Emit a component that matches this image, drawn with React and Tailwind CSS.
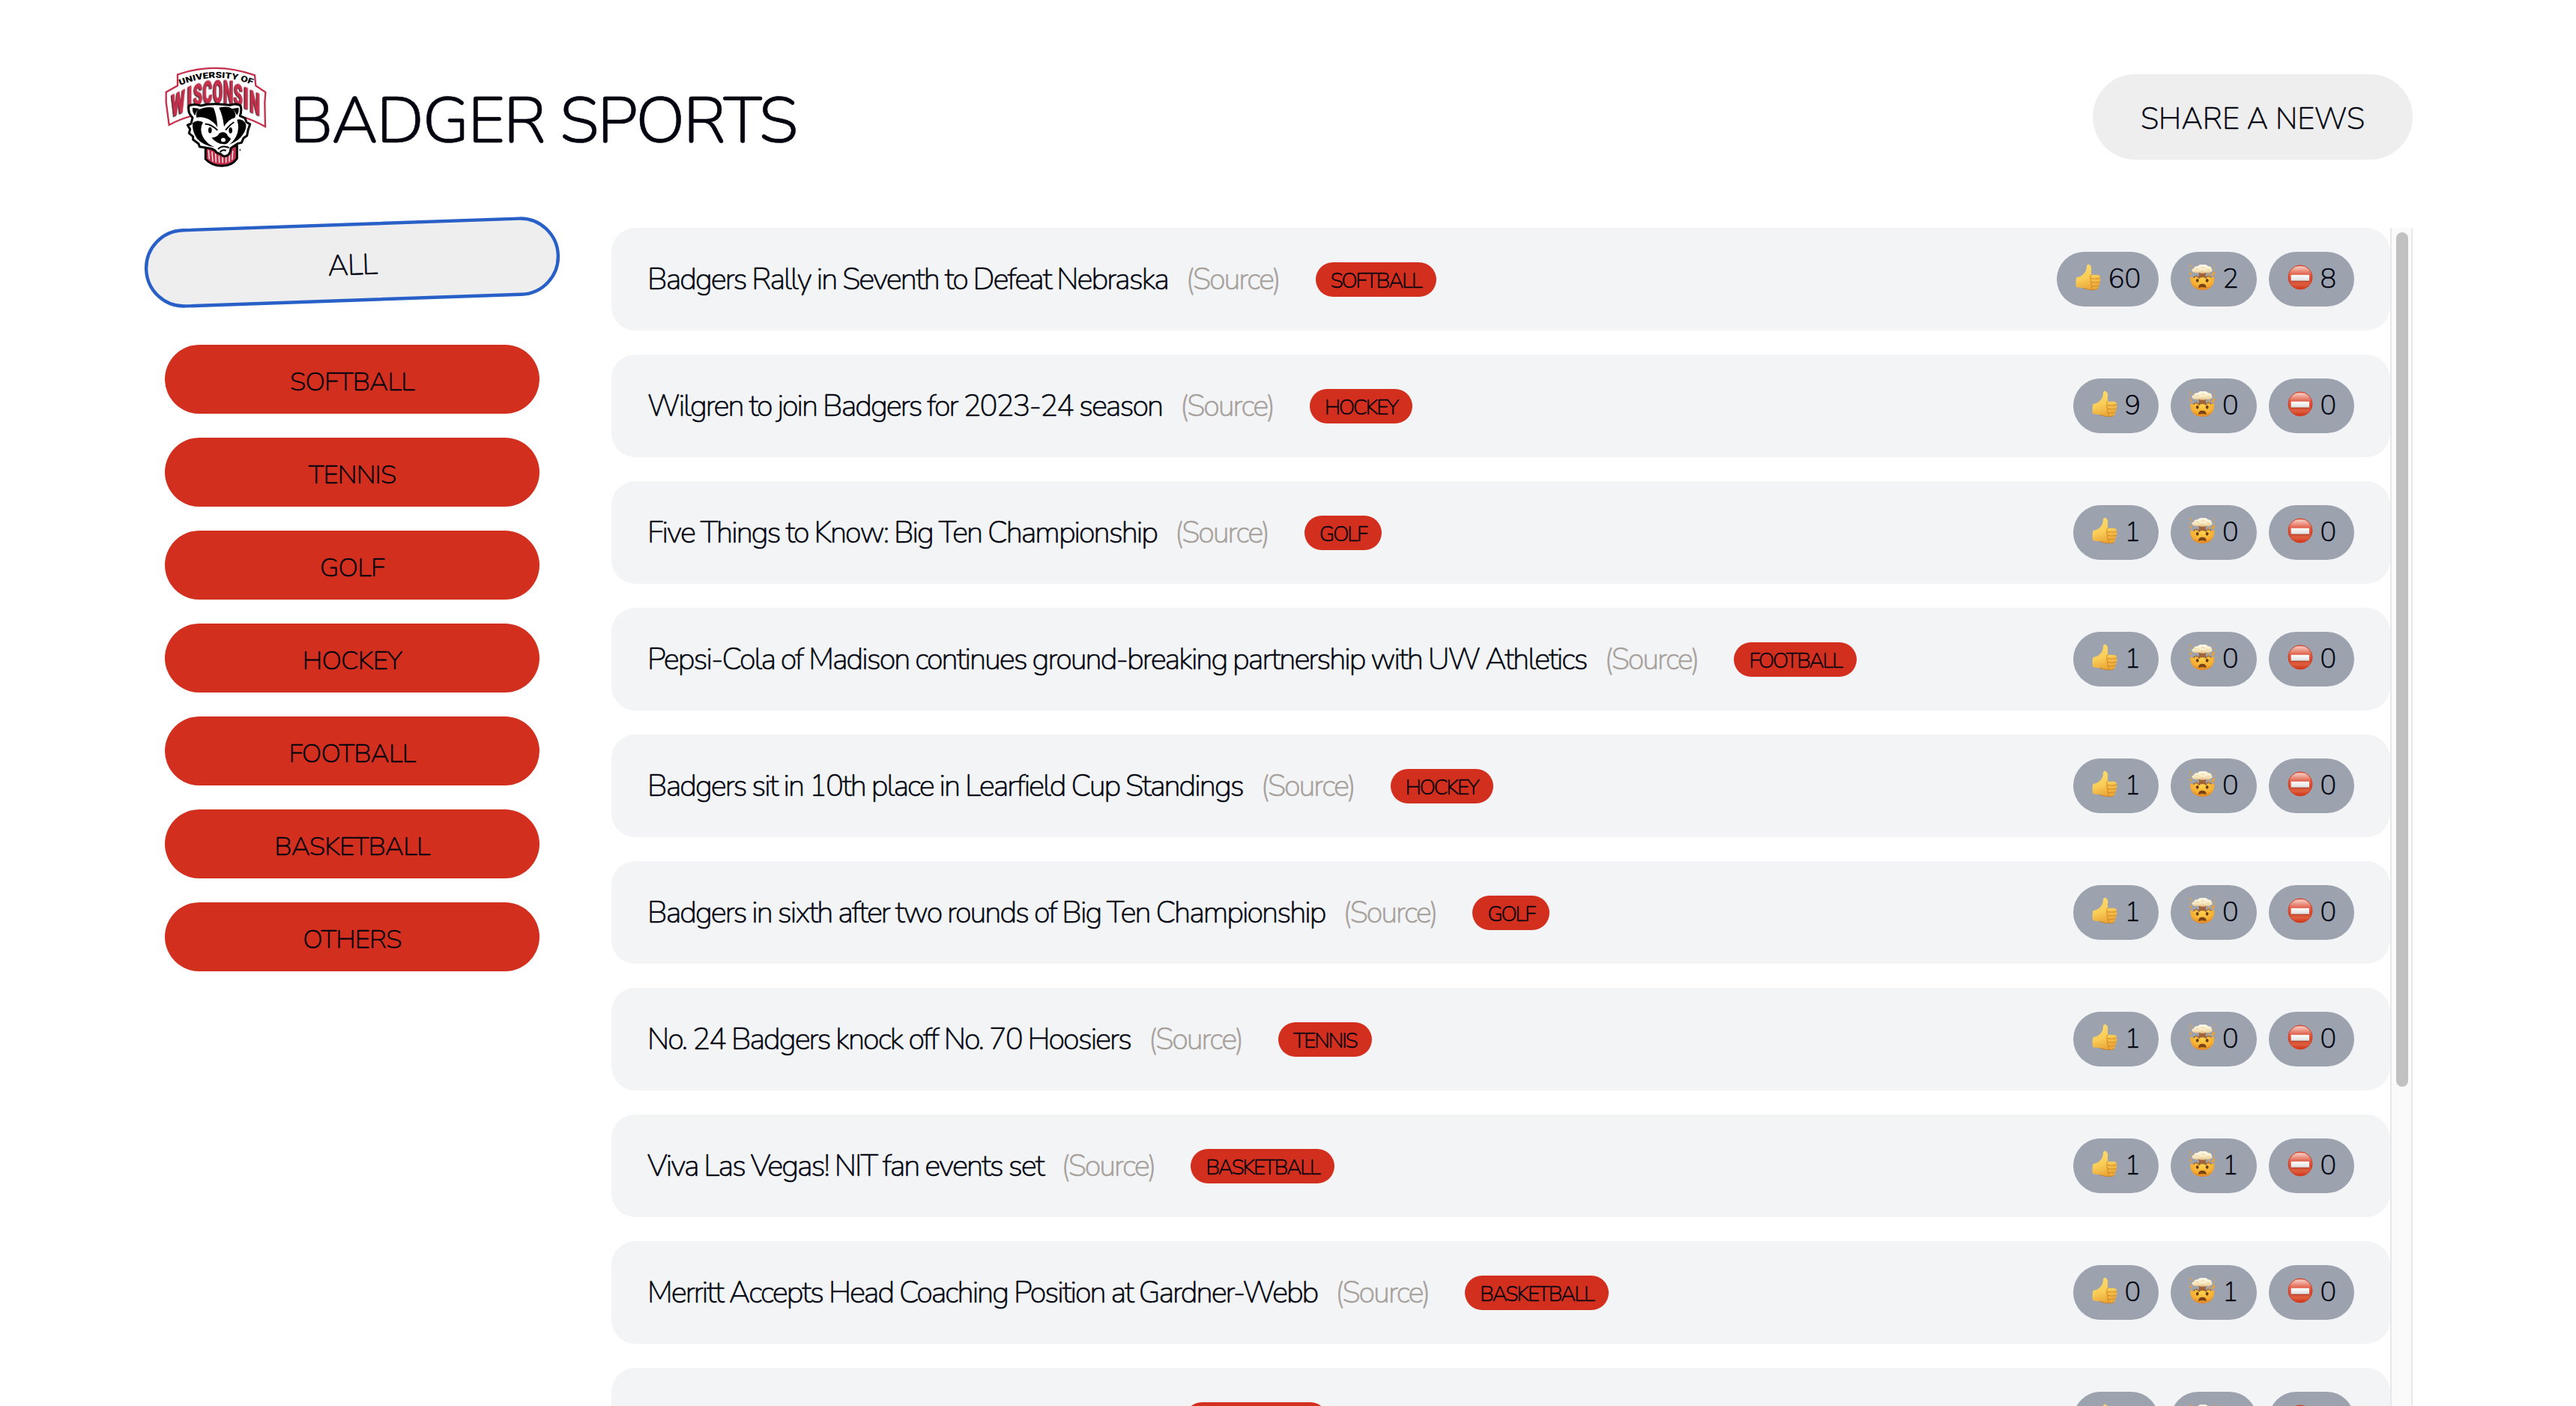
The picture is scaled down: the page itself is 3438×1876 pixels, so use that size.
const CATEGORIES = ["SOFTBALL", "TENNIS", "GOLF", "HOCKEY", "FOOTBALL", "BASKETBALL", "OTHERS"];

const NEWS = [
  { title: "Badgers Rally in Seventh to Defeat Nebraska", tag: "SOFTBALL", votes: [60, 2, 8] },
  { title: "Wilgren to join Badgers for 2023-24 season", tag: "HOCKEY", votes: [9, 0, 0] },
  { title: "Five Things to Know: Big Ten Championship", tag: "GOLF", votes: [1, 0, 0] },
  { title: "Pepsi-Cola of Madison continues ground-breaking partnership with UW Athletics", tag: "FOOTBALL", votes: [1, 0, 0] },
  { title: "Badgers sit in 10th place in Learfield Cup Standings", tag: "HOCKEY", votes: [1, 0, 0] },
  { title: "Badgers in sixth after two rounds of Big Ten Championship", tag: "GOLF", votes: [1, 0, 0] },
  { title: "No. 24 Badgers knock off No. 70 Hoosiers", tag: "TENNIS", votes: [1, 0, 0] },
  { title: "Viva Las Vegas! NIT fan events set", tag: "BASKETBALL", votes: [1, 1, 0] },
  { title: "Merritt Accepts Head Coaching Position at Gardner-Webb", tag: "BASKETBALL", votes: [0, 1, 0] },
  { title: "", tag: "BASKETBALL", votes: [0, 0, 0] },
];

const WORDMARK = [
  { c: "W", x: 115, y: 247, k: -24, sx: 0.64, sy: 1.2 },
  { c: "I", x: 161, y: 221, k: -18, sx: 0.7, sy: 1.16 },
  { c: "S", x: 194, y: 210, k: -12, sx: 0.58, sy: 1.18 },
  { c: "C", x: 233, y: 204, k: -7, sx: 0.58, sy: 1.26 },
  { c: "O", x: 274, y: 202, k: 0, sx: 0.58, sy: 1.3 },
  { c: "N", x: 316, y: 204, k: 5, sx: 0.57, sy: 1.28 },
  { c: "S", x: 355, y: 212, k: 11, sx: 0.57, sy: 1.18 },
  { c: "I", x: 387, y: 226, k: 18, sx: 0.7, sy: 1.16 },
  { c: "N", x: 422, y: 246, k: 24, sx: 0.58, sy: 1.2 },
];

function Logo() {
  return (
    <svg viewBox="62 58 406 402" className="h-[134px] w-[136px] shrink-0">
      <path
        d="M112 90 Q262 36 421 92 L425 134 L464 160 L461 202 L463 298 Q270 190 78 291 L66 200 L66 160 L112 134 Z"
        fill="#fff" stroke="#c5304c" strokeWidth="7"
      />
      <path id="arch" d="M122 133 Q268 74 410 130" fill="none" />
      <text fontFamily="Roboto" fontWeight="900" fontSize="33" fill="#000">
        <textPath href="#arch" textLength="296" lengthAdjust="spacingAndGlyphs">UNIVERSITY OF</textPath>
      </text>
      {WORDMARK.map((l, i) => (
        <text
          key={i}
          transform={`translate(${l.x} ${l.y}) skewY(${l.k}) scale(${l.sx} ${l.sy})`}
          fontFamily="Roboto" fontWeight="900" fontSize="100" textAnchor="middle"
          fill="#c5304c" stroke="#c5304c" strokeWidth="2"
          className="drop-shadow-[-4px_2px_0_#1a0a10]"
        >
          {l.c}
        </text>
      ))}
      <path d="M224 375 L224 428 Q250 456 290 455 Q330 455 350 425 L350 375 Z" fill="#c5304c" stroke="#000" strokeWidth="9" />
      <path d="M236 392 L239 428 M250 398 L253 438 M264 405 L266 441 M278 415 L279 443 M292 420 L293 443 M306 418 L306 442 M320 408 L319 438 M333 395 L331 430" stroke="#fff" strokeWidth="4" fill="none" />
      <path
        d="M158 214 Q178 205 205 214 Q250 202 322 212 Q348 203 364 214 Q370 232 362 255 L382 264 L388 280 L402 288 L394 312 L390 334 L376 344 L368 362 L352 366 L325 384 Q324 402 316 410 Q298 424 285 408 L268 402 Q262 390 245 386 L200 378 L196 366 L174 350 L174 338 L158 324 L162 308 L152 292 L166 286 L172 262 Q150 240 158 214 Z"
        fill="#fff" stroke="#000" strokeWidth="9" strokeLinejoin="round"
      />
      <path d="M172 222 L200 226 Q186 234 182 254 Q170 240 172 222 Z M330 226 L356 222 Q360 238 350 252 Q342 236 330 226 Z" fill="#000" />
      <path d="M192 232 Q225 216 256 222 Q268 250 272 300 Q258 280 236 268 Q210 256 188 262 Q184 246 192 232 Z" fill="#000" />
      <path d="M278 222 Q312 214 330 226 Q350 244 342 262 Q316 268 298 298 Q294 256 278 222 Z" fill="#000" />
      <path d="M172 284 Q188 268 214 280 Q198 308 214 340 Q230 368 260 380 Q214 374 190 346 Q170 318 172 284 Z" fill="#000" />
      <path d="M386 288 Q372 264 350 270 Q362 306 346 338 Q334 360 318 370 Q358 356 376 326 Q388 306 386 288 Z" fill="#000" />
      <path d="M222 288 Q242 286 272 312 M338 280 Q322 290 304 312" stroke="#000" strokeWidth="6" fill="none" />
      <ellipse cx="242" cy="312" rx="7" ry="12" fill="#000" />
      <ellipse cx="324" cy="313" rx="7" ry="12" fill="#000" />
      <path d="M248 342 Q270 342 278 326 Q294 314 308 326 Q316 342 326 346 Q314 370 296 368 Q268 366 248 342 Z" fill="#000" />
      <ellipse cx="295" cy="351" rx="9" ry="8" fill="#fff" />
      <path d="M274 388 Q290 370 318 382 M282 400 Q292 388 306 394" stroke="#000" strokeWidth="6" fill="none" />
      <ellipse cx="362" cy="391" rx="2.5" ry="4.5" fill="#333" />
    </svg>
  );
}

function ThumbsUp() {
  return (
    <svg viewBox="0 0 108 108" className="size-9 shrink-0">
      <defs>
        <linearGradient id="thumb" x1="0" y1="0" x2="0.3" y2="1">
          <stop offset="0" stopColor="#fcdc72" />
          <stop offset="0.6" stopColor="#f9cd57" />
          <stop offset="1" stopColor="#eba93a" />
        </linearGradient>
      </defs>
      <path d="M7 54 Q26 52 36 40 Q48 28 48 8 Q50 0 58 3 Q69 9 66 26 Q65 38 68 44 L92 44 Q104 46 101 57 Q106 64 100 72 Q103 80 96 86 Q98 98 90 101 Q84 106 68 104 Q52 104 34 97 Q20 96 6 93 Q3 72 7 54 Z" fill="url(#thumb)" />
      <path d="M66 44 Q60 50 62 55 M65 58 Q80 62 100 58 M67 73 Q82 77 99 73 M68 88 Q82 91 95 87 M64 58 Q60 64 66 72 Q62 80 68 87 Q65 95 72 102" stroke="#d98f28" strokeWidth="3.5" fill="none" strokeLinecap="round" />
      <path d="M34 97 Q52 104 68 104 Q84 106 90 101" stroke="#c9812a" strokeWidth="3" fill="none" />
    </svg>
  );
}

function ExplodingHead() {
  return (
    <svg viewBox="0 0 108 108" className="size-9 shrink-0">
      <defs>
        <radialGradient id="face" cx="0.5" cy="0.25" r="0.8">
          <stop offset="0" stopColor="#fcd24b" />
          <stop offset="0.6" stopColor="#f5ad33" />
          <stop offset="1" stopColor="#dc7a1e" />
        </radialGradient>
        <linearGradient id="cloud" x1="0" y1="0" x2="0" y2="1">
          <stop offset="0" stopColor="#fffbea" />
          <stop offset="0.7" stopColor="#f6e5bb" />
          <stop offset="1" stopColor="#dcb27a" />
        </linearGradient>
      </defs>
      <path d="M6 52 L20 56 L30 48 L42 58 L56 50 L68 58 L80 48 L90 55 L103 52 Q105 78 90 93 Q76 105 55 105 Q34 105 20 93 Q5 78 6 52 Z" fill="url(#face)" />
      <path d="M20 55 L30 48 L42 57 L56 50 L68 57 L80 48 L90 54" fill="none" stroke="#8f5220" strokeWidth="4" strokeDasharray="8 3" />
      <path d="M40 36 L70 36 Q65 44 72 54 L38 54 Q45 44 40 36 Z" fill="#a06238" />
      <path d="M14 30 Q10 21 21 19 Q23 8 36 10 Q44 1 57 4 Q71 1 78 10 Q93 10 92 21 Q99 28 89 33 Q80 40 70 35 Q56 42 42 35 Q24 40 14 30 Z" fill="url(#cloud)" />
      <path d="M28 22 Q36 16 42 24 M50 16 Q58 10 64 18 M70 26 Q78 20 84 27 M48 31 Q54 25 62 31" stroke="#e3cb94" strokeWidth="2.5" fill="none" />
      <path d="M2 36 L8 34 L14 46 L7 44 Z M92 44 L98 33 L106 31 L103 43 L94 50 Z M4 4 L9 3 L8 12 L4 10 Z M98 4 L104 2 L102 9 Z M14 10 L18 13 L14 17 Z M0 22 L5 20 L4 28 Z M101 17 L106 20 L103 26 Z M76 43 L86 39 L82 49 Z" fill="#f0a02f" />
      <ellipse cx="35" cy="67" rx="5.5" ry="7" fill="#6b3a12" />
      <ellipse cx="74" cy="67" rx="5.5" ry="7" fill="#6b3a12" />
      <path d="M39 96 Q39 80 55 80 Q71 80 71 96 Q55 91 39 96 Z" fill="#7a4318" />
    </svg>
  );
}

function NoEntry() {
  return (
    <svg viewBox="0 0 108 108" className="size-9 shrink-0">
      <defs>
        <linearGradient id="disc" x1="0" y1="0" x2="0" y2="1">
          <stop offset="0" stopColor="#d94a2e" />
          <stop offset="0.06" stopColor="#f6c9bf" />
          <stop offset="0.38" stopColor="#e0604a" />
          <stop offset="0.6" stopColor="#d14a2e" />
          <stop offset="0.8" stopColor="#dd5e3f" />
          <stop offset="1" stopColor="#cf3113" />
        </linearGradient>
        <linearGradient id="bar" x1="0" y1="0" x2="0" y2="1">
          <stop offset="0" stopColor="#fff" />
          <stop offset="1" stopColor="#dcdcdc" />
        </linearGradient>
      </defs>
      <circle cx="54" cy="54" r="48" fill="url(#disc)" stroke="#d63a1e" strokeWidth="3" />
      <rect x="17" y="44" width="73" height="25" rx="1" fill="url(#bar)" />
      <rect x="17" y="68" width="73" height="3" fill="#a83a24" />
    </svg>
  );
}

function Vote({ icon, count }) {
  return (
    <div className="flex h-[73px] items-center rounded-full bg-[#9ca3af] px-6 text-[36px]">
      <span className="-mt-1.5 flex">{icon}</span>
      <span className="whitespace-pre"> {count}</span>
    </div>
  );
}

function NewsRow({ title, tag, votes }) {
  return (
    <li className="flex h-[137px] shrink-0 items-center justify-between rounded-[32px] bg-gray-100 px-12">
      <div className="flex items-center text-[40px] tracking-[-2px] whitespace-nowrap">
        {title ? <span>{title}</span> : <span className="w-[520px]" />}
        <span className="ml-6 text-stone-400">(Source)</span>
        <span className="ml-12 flex h-[46px] items-center rounded-full bg-[#d32f1f] px-5 pt-1 text-[28px]">{tag}</span>
      </div>
      <div className="flex gap-4">
        <Vote icon={<ThumbsUp />} count={votes[0]} />
        <Vote icon={<ExplodingHead />} count={votes[1]} />
        <Vote icon={<NoEntry />} count={votes[2]} />
      </div>
    </li>
  );
}

export default function App() {
  return (
    <div className="flex h-[1876px] flex-col overflow-hidden bg-white pt-[89px] pr-[218px] pl-[220px] font-[Nunito,'Nunito_Sans',Lato,sans-serif] font-extralight text-[#02040f] [-webkit-text-stroke:0.6px]">
      <header className="flex h-[134px] items-center justify-between">
        <div className="flex items-center gap-[31px]">
          <Logo />
          <h1 className="pt-3 text-[86.4px] leading-none font-light tracking-[-2px]">BADGER SPORTS</h1>
        </div>
        <button className="h-[114px] rounded-full bg-[#eee] px-16 pt-1.5 text-[40px]">SHARE A NEWS</button>
      </header>
      <div className="mt-[81px] flex min-h-0 grow gap-24">
        <nav className="flex w-[500px] shrink-0 flex-col text-[35.2px] tracking-[-0.8px]">
          <button className="mb-16 h-[92px] w-[500px] shrink-0 scale-110 -rotate-2 rounded-full bg-[#eee] pt-1.5 outline-4 -outline-offset-2 outline-[#2860c8]">
            ALL
          </button>
          <div className="flex flex-col gap-8">
            {CATEGORIES.map((c) => (
              <button key={c} className="h-[92px] w-[500px] rounded-full bg-[#d32f1f] pt-1.5">{c}</button>
            ))}
          </div>
        </nav>
        <ul className="flex min-w-0 grow flex-col gap-8 overflow-hidden">
          {NEWS.map((n, i) => (
            <NewsRow key={i} {...n} />
          ))}
        </ul>
        <div className="-ml-24 w-[30px] shrink-0 border-x-2 border-[#e8e8e8] bg-[#fafafa] pt-1.5 pl-1.5">
          <div className="h-[1140px] w-4 rounded-full bg-[#c1c1c1]" />
        </div>
      </div>
    </div>
  );
}
